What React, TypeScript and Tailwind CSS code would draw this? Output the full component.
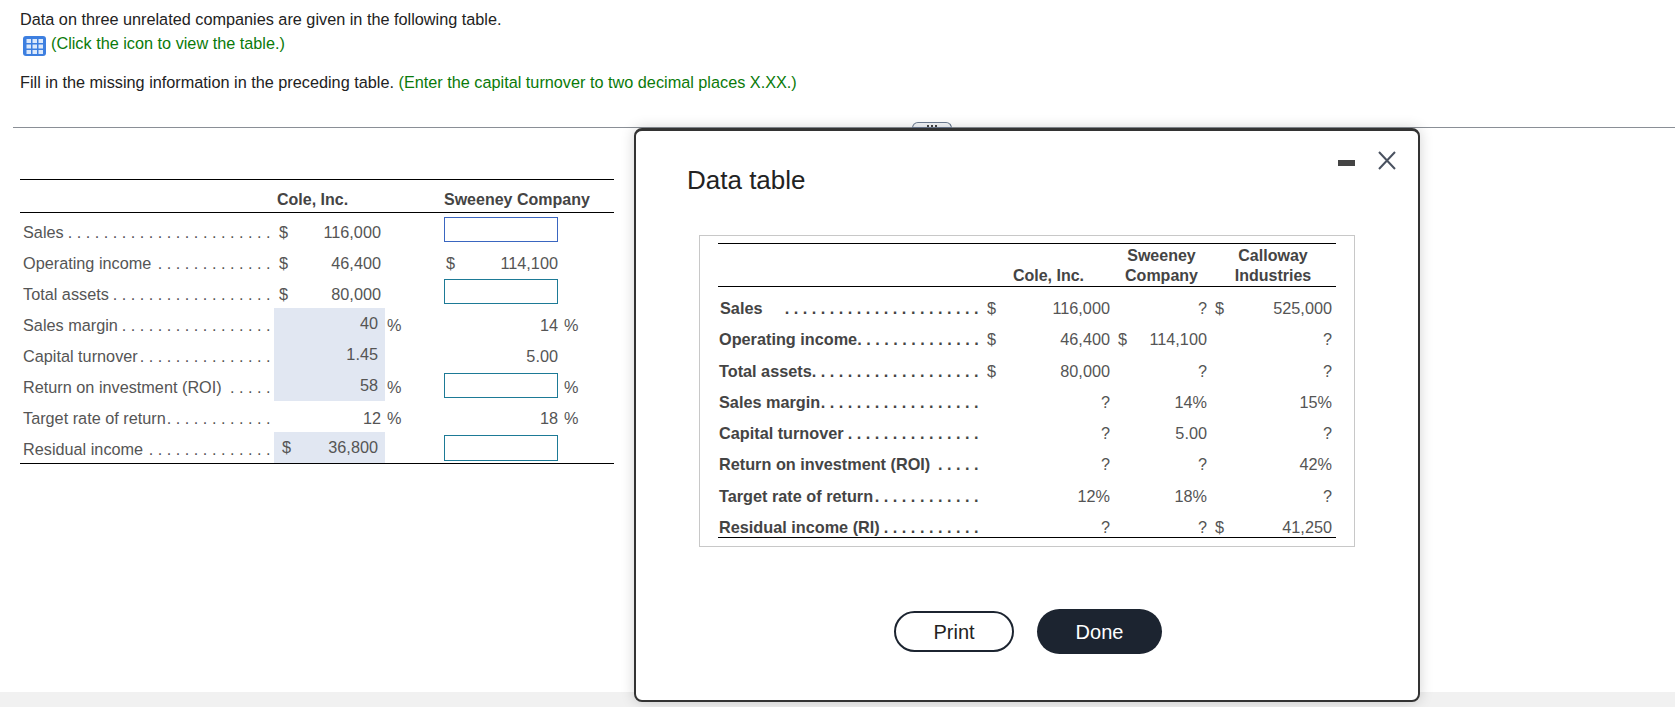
import React from 'react';

const Dots = ({ n }: { n: number }) => (
  <span className="ml-auto shrink-0 whitespace-nowrap tracking-[4.5px] -mr-[4px]">{'.'.repeat(n)}</span>
);

const TableIcon = () => (
  <svg width="23" height="20" viewBox="0 0 23 20" className="shrink-0 mt-[5px]">
    <rect x="0" y="0" width="23" height="20" rx="3" fill="#3d7fe0" />
    {[3, 8.5, 14].map((y) =>
      [3.5, 9.5, 15.5].map((x) => (
        <rect key={`${x}-${y}`} x={x} y={y} width="4.5" height="4" fill="#dce9fb" />
      ))
    )}
  </svg>
);

const Field = ({ color = 'border-[#1d7a96]', className = '' }: { color?: string; className?: string }) => (
  <input className={`w-[114px] h-[25px] self-start border bg-white ${color} ${className}`} />
);

const LeftRow = ({ children }: { children: React.ReactNode }) => (
  <div className="grid grid-cols-[254px_111px_59px_115px_55px] h-[31px]">{children}</div>
);

const Label = ({ text, dots }: { text: string; dots: number }) => (
  <div className="flex items-center pt-[4px] pl-[3px] pr-[3px] overflow-hidden">
    <span className="whitespace-nowrap">{text}</span>
    <Dots n={dots} />
  </div>
);

const Money = ({ value, dollar }: { value: string; dollar?: boolean }) => (
  <div className="flex items-center justify-between pt-[4px] pl-[5px] pr-[4px]">
    <span>{dollar ? '$' : ''}</span>
    <span>{value}</span>
  </div>
);

const Shaded = ({ value, dollar }: { value: string; dollar?: boolean }) => (
  <div className="flex items-center justify-between pb-[1px] pl-[8px] pr-[7px] bg-[#e1e7f2]">
    <span>{dollar ? '$' : ''}</span>
    <span>{value}</span>
  </div>
);

const Pct = ({ show = true, left = 'pl-[2px]' }: { show?: boolean; left?: string }) => (
  <div className={`flex items-center pt-[4px] ${left}`}>{show ? '%' : ''}</div>
);

const modalRows = [
  { label: 'Sales', dots: 22, a: ['$', '116,000'], b: ['', '?'], c: ['$', '525,000'] },
  { label: 'Operating income', dots: 14, a: ['$', '46,400'], b: ['$', '114,100'], c: ['', '?'] },
  { label: 'Total assets', dots: 19, a: ['$', '80,000'], b: ['', '?'], c: ['', '?'] },
  { label: 'Sales margin', dots: 18, a: ['', '?'], b: ['', '14%'], c: ['', '15%'] },
  { label: 'Capital turnover', dots: 15, a: ['', '?'], b: ['', '5.00'], c: ['', '?'] },
  { label: 'Return on investment (ROI)', dots: 5, a: ['', '?'], b: ['', '?'], c: ['', '42%'] },
  { label: 'Target rate of return', dots: 12, a: ['', '12%'], b: ['', '18%'], c: ['', '?'] },
  { label: 'Residual income (RI)', dots: 11, a: ['', '?'], b: ['', '?'], c: ['$', '41,250'] },
];

const modalCols = 'grid grid-cols-[266px_129px_97px_126px]';

const App = () => {
  return (
    <div className="relative w-[1675px] h-[707px] overflow-hidden bg-white flex flex-col font-['Liberation_Sans',Arial,sans-serif] text-[16.25px] text-[#555]">
      <div className="pt-[7px] pl-5 text-[#222]">
        <p className="h-6 leading-6">Data on three unrelated companies are given in the following table.</p>
        <p className="h-6 leading-6 flex items-center pl-[3px] gap-[5px] text-[#0a7a0a]">
          <TableIcon />
          <span>(Click the icon to view the table.)</span>
        </p>
        <p className="h-6 leading-6 mt-[15px]">
          Fill in the missing information in the preceding table.{' '}
          <span className="text-[#0a7a0a]">(Enter the capital turnover to two decimal places X.XX.)</span>
        </p>
      </div>

      <div className="relative mt-[33px] ml-[13px] h-px bg-[#8a8f96]">
        {/* drag handle, mostly hidden by the dialog */}
        <div className="absolute left-[899px] -top-[5px] w-10 h-[6px] rounded-t-md border border-[#6d7c92] bg-[#f3f5f8] flex justify-center gap-[2px] pt-[2px]">
          <span className="w-[2px] h-[2px] bg-[#444]" />
          <span className="w-[2px] h-[2px] bg-[#444]" />
          <span className="w-[2px] h-[2px] bg-[#444]" />
        </div>
      </div>

      {/* answer table */}
      <div className="ml-5 mt-[51px] w-[594px]">
        <div className="border-t border-black border-b h-[34px] grid grid-cols-[257px_167px_170px] items-center pt-[7px] font-bold text-base text-[#444]">
          <span />
          <span>Cole, Inc.</span>
          <span className="whitespace-nowrap">Sweeney Company</span>
        </div>
        <div className="pt-[2px] border-b border-black">
          <LeftRow>
            <Label text="Sales" dots={23} />
            <Money value="116,000" dollar />
            <span />
            <Field color="border-[#3a66c0]" className="mt-[2px]" />
          </LeftRow>
          <LeftRow>
            <Label text="Operating income" dots={13} />
            <Money value="46,400" dollar />
            <span />
            <div className="flex items-center justify-between pt-[4px] pl-[2px] pr-px">
              <span>$</span>
              <span>114,100</span>
            </div>
          </LeftRow>
          <LeftRow>
            <Label text="Total assets" dots={18} />
            <Money value="80,000" dollar />
            <span />
            <Field className="mt-[2px]" />
          </LeftRow>
          <LeftRow>
            <Label text="Sales margin" dots={17} />
            <Shaded value="40" />
            <Pct />
            <div className="flex items-center justify-end pt-[4px] pr-px">14</div>
            <Pct left="pl-[5px]" />
          </LeftRow>
          <LeftRow>
            <Label text="Capital turnover" dots={15} />
            <Shaded value="1.45" />
            <span />
            <div className="flex items-center justify-end pt-[4px] pr-px">5.00</div>
          </LeftRow>
          <LeftRow>
            <Label text="Return on investment (ROI)" dots={5} />
            <Shaded value="58" />
            <Pct />
            <Field className="mt-[3px]" />
            <Pct left="pl-[5px]" />
          </LeftRow>
          <LeftRow>
            <Label text="Target rate of return" dots={12} />
            <Money value="12" />
            <Pct />
            <div className="flex items-center justify-end pt-[4px] pr-px">18</div>
            <Pct left="pl-[5px]" />
          </LeftRow>
          <LeftRow>
            <Label text="Residual income" dots={14} />
            <Shaded value="36,800" dollar />
            <span />
            <Field className="mt-[3px] h-[26px]" />
          </LeftRow>
        </div>
      </div>

      <div className="mt-auto h-[15px] bg-[#f1f1f1]" />

      {/* dialog */}
      <div className="absolute left-[634px] top-[128px] w-[786px] h-[574px] bg-white border-2 border-t-[3px] border-[#333] rounded-lg shadow-[0_0_14px_rgba(0,0,0,0.18)] flex flex-col">
        <div className="absolute left-[702px] top-[29px] w-[17px] h-[6px] bg-[#444]" />
        <svg width="20" height="19" viewBox="0 0 20 19" className="absolute left-[741px] top-[20px]">
          <path d="M2 1 L18 18 M18 1 L2 18" stroke="#4a5260" strokeWidth="2" fill="none" />
        </svg>

        <h2 className="pt-[33px] pl-[51px] h-16 text-[26px] leading-8 text-[#222]">Data table</h2>

        <div className="ml-[63px] mt-10 w-[656px] h-[312px] border border-[#c8c8c8] px-[18px] pt-[7px]">
          <div className={`${modalCols} h-[44px] border-t border-b border-black font-bold text-base text-[#444] text-center leading-5`}>
            <span />
            <span className="self-end">Cole, Inc.</span>
            <span className="self-end">Sweeney<br />Company</span>
            <span className="self-end">Calloway<br />Industries</span>
          </div>
          <div className="border-b border-black">
            {modalRows.map((r) => (
              <div key={r.label} className={`${modalCols} h-[31.3px]`}>
                <div className="flex items-center pt-[9px] pl-px pr-[5px] overflow-hidden font-bold text-[#444]">
                  <span className={`whitespace-nowrap ${r.label === 'Sales' ? 'pl-px' : ''}`}>{r.label}</span>
                  <Dots n={r.dots} />
                </div>
                <div className="flex items-center justify-between pl-[3px] pr-[3px] pt-[9px]">
                  <span>{r.a[0]}</span>
                  <span>{r.a[1]}</span>
                </div>
                <div className="flex items-center justify-between pl-[5px] pr-[3px] pt-[9px]">
                  <span>{r.b[0]}</span>
                  <span>{r.b[1]}</span>
                </div>
                <div className="flex items-center justify-between pl-[5px] pr-[4px] pt-[9px]">
                  <span>{r.c[0]}</span>
                  <span>{r.c[1]}</span>
                </div>
              </div>
            ))}
          </div>
        </div>

        <div className="mt-[62px] pl-[2px] flex items-center justify-center gap-[23px] text-xl">
          <button className="w-[120px] h-[41px] rounded-[21px] border-2 border-[#1c2430] bg-white text-[#222]">Print</button>
          <button className="w-[125px] h-[45px] rounded-[23px] bg-[#1c2430] text-white">Done</button>
        </div>
      </div>
    </div>
  );
};

export default App;
